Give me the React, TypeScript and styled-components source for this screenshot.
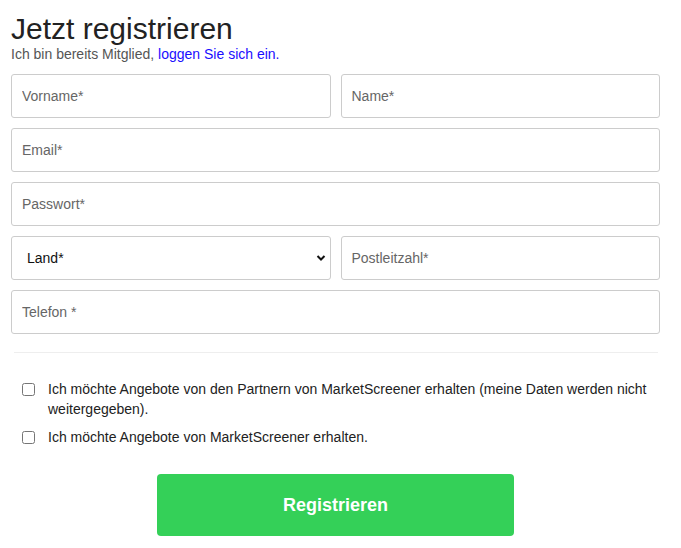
import styled, { createGlobalStyle } from "styled-components";

const GlobalStyle = createGlobalStyle`
  body {
    margin: 0;
    background: #fff;
    font-family: "Liberation Sans", Arial, sans-serif;
    color: #333;
  }
  * {
    box-sizing: border-box;
  }
`;

const Page = styled.div`
  padding: 12px 21px 0 11px;
  width: 681px;
`;

const Title = styled.h1`
  margin: 0;
  font-size: 30px;
  font-weight: 400;
  line-height: 34px;
  color: #222;
`;

const Subtitle = styled.p`
  margin: 0 0 12px;
  font-size: 14px;
  line-height: 16px;
  color: #555;

  a {
    color: #1a0dff;
    text-decoration: none;
  }
`;

const Grid = styled.div`
  display: grid;
  grid-template-columns: 1fr 1fr;
  gap: 10px;
`;

const Input = styled.input<{ $wide?: boolean }>`
  grid-column: ${({ $wide }) => ($wide ? "1 / span 2" : "auto")};
  height: 44px;
  width: 100%;
  padding: 0 10px;
  border: 1px solid #ccc;
  border-radius: 3px;
  font-family: "Liberation Sans", Arial, sans-serif;
  font-size: 14px;
  color: #333;
  outline: none;

  &::placeholder {
    color: #666;
  }
`;

const SelectWrap = styled.div`
  position: relative;
  height: 44px;
`;

const Select = styled.select`
  appearance: none;
  width: 100%;
  height: 100%;
  padding: 0 15px;
  border: 1px solid #ccc;
  border-radius: 3px;
  background: #fff;
  font-family: "Liberation Sans", Arial, sans-serif;
  font-size: 14px;
  color: #111;
`;

const Chevron = styled.svg`
  position: absolute;
  right: 5px;
  top: 17px;
  pointer-events: none;
`;

const Divider = styled.hr`
  margin: 18px 2px 0 3px;
  border: 0;
  border-top: 1px solid #eee;
`;

const Checks = styled.div`
  display: flex;
  flex-direction: column;
  gap: 8px;
  padding: 26px 0 0 10px;
`;

const CheckRow = styled.label`
  display: flex;
  align-items: flex-start;
  gap: 13px;
  font-size: 14px;
  line-height: 20px;
  color: #222;
`;

const Box = styled.input`
  flex: none;
  width: 13px;
  height: 13px;
  margin: 4px 0 0 1px;
`;

const ButtonRow = styled.div`
  display: flex;
  justify-content: center;
  padding: 27px 0 0 0;
`;

const Submit = styled.button`
  width: 357px;
  height: 62px;
  border: none;
  border-radius: 4px;
  background: #34d058;
  color: #fff;
  font-family: "Liberation Sans", Arial, sans-serif;
  font-size: 18px;
  font-weight: 700;
  cursor: pointer;
`;

export default function App() {
  return (
    <Page>
      <GlobalStyle />
      <Title>Jetzt registrieren</Title>
      <Subtitle>
        Ich bin bereits Mitglied, <a href="#">loggen Sie sich ein.</a>
      </Subtitle>
      <Grid>
        <Input placeholder="Vorname*" />
        <Input placeholder="Name*" />
        <Input $wide placeholder="Email*" />
        <Input $wide type="password" placeholder="Passwort*" />
        <SelectWrap>
          <Select defaultValue="">
            <option value="">Land*</option>
          </Select>
          <Chevron width="10" height="10" viewBox="0 0 10 10">
            <path d="M1.5 3 L5 6.5 L8.5 3" fill="none" stroke="#111" strokeWidth="2" />
          </Chevron>
        </SelectWrap>
        <Input placeholder="Postleitzahl*" />
        <Input $wide placeholder="Telefon *" />
      </Grid>
      <Divider />
      <Checks>
        <CheckRow>
          <Box type="checkbox" />
          <span>
            Ich möchte Angebote von den Partnern von MarketScreener erhalten (meine Daten werden nicht
            weitergegeben).
          </span>
        </CheckRow>
        <CheckRow>
          <Box type="checkbox" />
          <span>Ich möchte Angebote von MarketScreener erhalten.</span>
        </CheckRow>
      </Checks>
      <ButtonRow>
        <Submit>Registrieren</Submit>
      </ButtonRow>
    </Page>
  );
}
